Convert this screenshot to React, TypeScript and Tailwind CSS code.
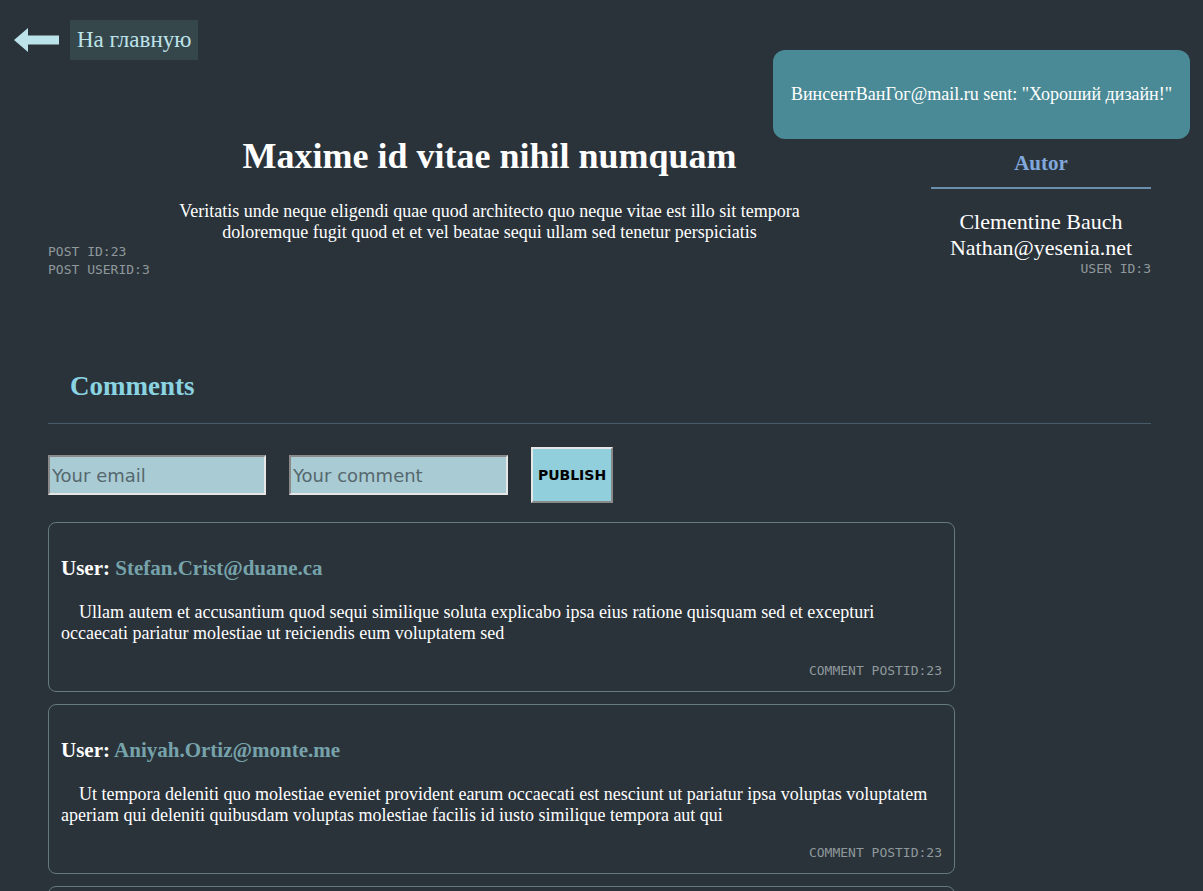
import React from 'react'

type Comment = { id: number; email: string; body: string; postId: number }

const post = {
  id: 23,
  userId: 3,
  title: 'Maxime id vitae nihil numquam',
  body: 'Veritatis unde neque eligendi quae quod architecto quo neque vitae est illo sit tempora doloremque fugit quod et et vel beatae sequi ullam sed tenetur perspiciatis',
}

const author = { id: 3, name: 'Clementine Bauch', email: 'Nathan@yesenia.net' }

const comments: Comment[] = [
  {
    id: 1,
    email: 'Stefan.Crist@duane.ca',
    body: 'Ullam autem et accusantium quod sequi similique soluta explicabo ipsa eius ratione quisquam sed et excepturi occaecati pariatur molestiae ut reiciendis eum voluptatem sed',
    postId: 23,
  },
  {
    id: 2,
    email: 'Aniyah.Ortiz@monte.me',
    body: 'Ut tempora deleniti quo molestiae eveniet provident earum occaecati est nesciunt ut pariatur ipsa voluptas voluptatem aperiam qui deleniti quibusdam voluptas molestiae facilis id iusto similique tempora aut qui',
    postId: 23,
  },
  {
    id: 3,
    email: 'Jerrod.Kozey@ola.net',
    body: 'Quia est et ea sit enim voluptatibus autem quasi natus ut et eum',
    postId: 23,
  },
]

function BackArrow() {
  return (
    <svg width="45" height="26" viewBox="0 0 45 26" className="shrink-0">
      <path d="M0 13 L14 1 L14 8.5 L45 8.5 L45 17.5 L14 17.5 L14 25 Z" fill="#bde3ea" />
    </svg>
  )
}

function CommentCard({ comment }: { comment: Comment }) {
  return (
    <div className="rounded-lg border border-[#647a80] px-3 pt-[34px] pb-[12px]">
      <h3 className="text-[21px] font-bold leading-[22px] text-white">
        User: <span className="text-[#76a3ab]">{comment.email}</span>
      </h3>
      <p className="mt-[23px] indent-[18px] text-[18px] leading-[21px] text-white">{comment.body}</p>
      <div className="mt-[19px] text-right font-['DejaVu_Sans_Mono',monospace] text-[13px] leading-[16px] text-[#8f999c]">
        COMMENT POSTID:{comment.postId}
      </div>
    </div>
  )
}

export default function App() {
  return (
    <div className="relative min-h-screen bg-[#2b333a] font-['Liberation_Serif',serif]">
      <div className="flex items-center gap-[11px] px-[14px] pt-5">
        <BackArrow />
        <a className="bg-[#36474c] px-[7px] py-[7px] text-[23px] leading-[26px] text-[#bde3ea]">На главную</a>
      </div>

      <div className="absolute right-[13px] top-[50px] flex h-[89px] w-[417px] items-center justify-center rounded-xl bg-[#4a8a96] text-[18px] text-white">
        ВинсентВанГог@mail.ru sent: "Хороший дизайн!"
      </div>

      <div className="flex pl-[48px] pr-[52px] pt-[76px]">
        <div className="flex-1">
          <h1 className="text-center text-[36px] font-bold leading-[40px] text-white">{post.title}</h1>
          <p className="mx-auto mt-[25px] max-w-[640px] text-center text-[18px] leading-[21px] text-white">{post.body}</p>
          <div className="font-['DejaVu_Sans_Mono',monospace] text-[13px] leading-[18px] text-[#8f999c]">
            <div>POST ID:{post.id}</div>
            <div>POST USERID:{post.userId}</div>
          </div>
        </div>
        <div className="w-[220px] pt-[17px]">
          <h2 className="text-center text-[21px] font-bold leading-[20px] text-[#80a8dc]">Autor</h2>
          <div className="mt-[14px] h-[2px] bg-[#6a8fae]" />
          <div className="mt-[20px] text-center text-[22px] leading-[26px] text-white">
            <div>{author.name}</div>
            <div>{author.email}</div>
          </div>
          <div className="text-right font-['DejaVu_Sans_Mono',monospace] text-[13px] leading-[16px] text-[#8f999c]">
            USER ID:{author.id}
          </div>
        </div>
      </div>

      <div className="pl-[48px] pr-[52px] pt-[92px]">
        <h2 className="pl-[22px] text-[27px] font-bold leading-[30px] text-[#8ad3e2]">Comments</h2>
        <div className="mt-[22px] h-px bg-[#475c68]" />

        <div className="mt-[23px] flex items-center gap-[23px]">
          <input
            placeholder="Your email"
            className="h-[40px] w-[218px] border-2 border-b-[#e6e6e6] border-l-[#8a8a8a] border-r-[#e6e6e6] border-t-[#8a8a8a] bg-[#a8cbd4] px-[2px] font-['DejaVu_Sans',sans-serif] text-[18px] text-[#333] outline-none placeholder:text-[#56686e]"
          />
          <input
            placeholder="Your comment"
            className="h-[40px] w-[219px] border-2 border-b-[#e6e6e6] border-l-[#8a8a8a] border-r-[#e6e6e6] border-t-[#8a8a8a] bg-[#a8cbd4] px-[2px] font-['DejaVu_Sans',sans-serif] text-[18px] text-[#333] outline-none placeholder:text-[#56686e]"
          />
          <button className="h-[56px] w-[82px] border-2 border-b-[#8a8a8a] border-l-[#e6e6e6] border-r-[#8a8a8a] border-t-[#e6e6e6] bg-[#92cfdc] font-['DejaVu_Sans',sans-serif] text-[14px] font-bold text-black">
            PUBLISH
          </button>
        </div>

        <div className="mt-[19px] flex w-[907px] flex-col gap-[12px]">
          {comments.map((c) => (
            <CommentCard key={c.id} comment={c} />
          ))}
        </div>
      </div>
    </div>
  )
}
